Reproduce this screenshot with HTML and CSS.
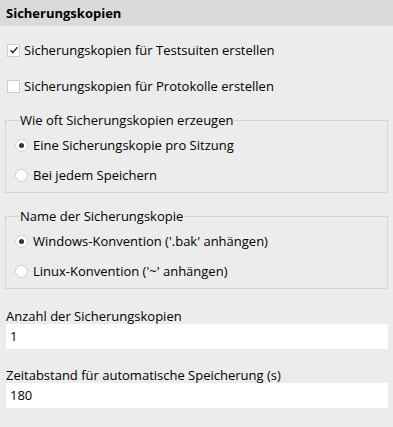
FILE: index.html
```html
<!DOCTYPE html>
<html lang="de">
<head>
<meta charset="utf-8">
<title>Sicherungskopien</title>
<link rel="stylesheet" href="styles.css">
</head>
<body>
<div class="panel">
  <div class="header">Sicherungskopien</div>
  <div class="content">
    <div class="checks">
      <label class="row check-row"><span class="box checked"><svg width="10" height="10" viewBox="0 0 10 10"><path d="M1.5 5.2 L3.8 7.5 L8.5 2.3" fill="none" stroke="#333" stroke-width="1.6"/></svg></span>Sicherungskopien für Testsuiten erstellen</label>
      <label class="row check-row"><span class="box"></span>Sicherungskopien für Protokolle erstellen</label>
    </div>
    <fieldset class="group">
      <legend>Wie oft Sicherungskopien erzeugen</legend>
      <label class="row radio-row"><span class="radio on"></span>Eine Sicherungskopie pro Sitzung</label>
      <label class="row radio-row"><span class="radio"></span>Bei jedem Speichern</label>
    </fieldset>
    <fieldset class="group group2">
      <legend>Name der Sicherungskopie</legend>
      <label class="row radio-row"><span class="radio on"></span>Windows-Konvention ('.bak' anhängen)</label>
      <label class="row radio-row"><span class="radio"></span>Linux-Konvention ('~' anhängen)</label>
    </fieldset>
    <div class="field">
      <div class="field-label">Anzahl der Sicherungskopien</div>
      <div class="input">1</div>
    </div>
    <div class="field field2">
      <div class="field-label">Zeitabstand für automatische Speicherung (s)</div>
      <div class="input">180</div>
    </div>
  </div>
</div>
</body>
</html>
```
FILE: styles.css
```css
html, body {
  margin: 0;
  padding: 0;
  background: #ececec;
}
body {
  font-family: "Open Sans", "Noto Sans", sans-serif;
  font-size: 13px;
  color: #000;
  width: 393px;
  height: 427px;
  overflow: hidden;
}
.header {
  height: 26px;
  line-height: 26px;
  background: #dadada;
  font-weight: bold;
  padding-left: 6px;
}
.content {
  padding: 0 5px 0 5px;
  display: flex;
  flex-direction: column;
}
.checks {
  display: flex;
  flex-direction: column;
  gap: 16px;
  margin-top: 14px;
  padding-left: 2px;
}
.row {
  display: flex;
  align-items: center;
  height: 20px;
  white-space: nowrap;
}
.box {
  width: 11px;
  height: 11px;
  border: 1px solid #cfcfcf;
  background: #fff;
  margin-right: 4px;
  display: flex;
  align-items: center;
  justify-content: center;
  flex: none;
}
.group {
  margin: 17px 0 0 0;
  padding: 8px 0 7px 9px;
  border: 1px solid #d5d5d5;
  display: flex;
  flex-direction: column;
  gap: 10px;
  min-width: 0;
}
.group2 {
  margin-top: 16px;
}
.group legend {
  padding: 0 1px;
  margin-left: 4px;
  line-height: 14px;
}
.radio {
  width: 11px;
  height: 11px;
  border: 1px solid #d0d0d0;
  border-radius: 50%;
  background: #fff;
  margin-right: 5px;
  flex: none;
  display: flex;
  align-items: center;
  justify-content: center;
}
.radio.on::after {
  content: "";
  width: 5px;
  height: 5px;
  border-radius: 50%;
  background: #333;
}
.field {
  margin-top: 19px;
  padding-left: 1px;
}
.field2 {
  margin-top: 18px;
}
.field-label {
  height: 16px;
  line-height: 16px;
}
.input {
  height: 25px;
  line-height: 25px;
  background: #fff;
  padding-left: 4px;
}
```
